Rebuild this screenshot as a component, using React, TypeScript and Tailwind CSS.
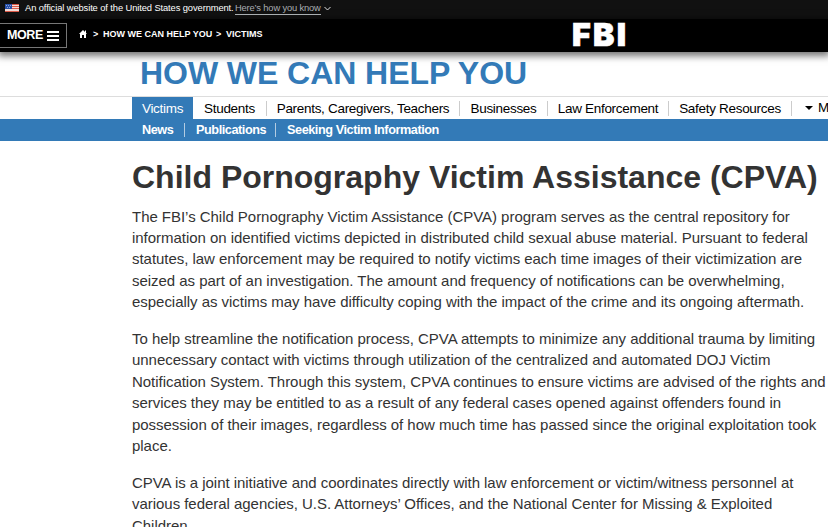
import React from "react";

const paragraphs = [
  [
    "The FBI’s Child Pornography Victim Assistance (CPVA) program serves as the central repository for",
    "information on identified victims depicted in distributed child sexual abuse material. Pursuant to federal",
    "statutes, law enforcement may be required to notify victims each time images of their victimization are",
    "seized as part of an investigation. The amount and frequency of notifications can be overwhelming,",
    "especially as victims may have difficulty coping with the impact of the crime and its ongoing aftermath.",
  ],
  [
    "To help streamline the notification process, CPVA attempts to minimize any additional trauma by limiting",
    "unnecessary contact with victims through utilization of the centralized and automated DOJ Victim",
    "Notification System. Through this system, CPVA continues to ensure victims are advised of the rights and",
    "services they may be entitled to as a result of any federal cases opened against offenders found in",
    "possession of their images, regardless of how much time has passed since the original exploitation took",
    "place.",
  ],
  [
    "CPVA is a joint initiative and coordinates directly with law enforcement or victim/witness personnel at",
    "various federal agencies, U.S. Attorneys’ Offices, and the National Center for Missing & Exploited",
    "Children.",
  ],
];

const tabs = [
  { label: "Students", width: "w-[74px]" },
  { label: "Parents, Caregivers, Teachers", width: "w-[193px]" },
  { label: "Businesses", width: "w-[88px]" },
  { label: "Law Enforcement", width: "w-[121px]" },
  { label: "Safety Resources", width: "w-[123px]" },
];

function Flag() {
  return (
    <svg width="14" height="8" viewBox="0 0 14 8" className="block shrink-0" shapeRendering="crispEdges">
      <rect width="14" height="8" fill="#f2dcd8" />
      <path d="M0 .5h14M0 2.5h14M0 4.5h14M0 7.5h14" stroke="#dc5a48" />
      <rect width="7" height="5" fill="#2850a8" />
      <path d="M1 1h1M3 1h1M5 1h1M2 3h1M4 3h1" stroke="#8fa3d6" />
    </svg>
  );
}

export default function App() {
  return (
    <div className="h-[527px] w-[828px] overflow-hidden bg-white font-['Liberation_Sans',Arial,sans-serif]">
      <div className="flex h-[19px] items-center bg-[#111] pb-[3px] pl-[5px] text-[9.35px] leading-none text-white">
        <Flag />
        <span className="ml-[6px] mt-[2px] w-[210px] whitespace-nowrap tracking-[-0.1px]">An official website of the United States government.</span>
        <span className="mt-[2px] h-[11px] w-[86px] whitespace-nowrap border-b border-[#a9aeb1] tracking-[-0.16px] text-[#a9aeb1]">Here’s how you know</span>
        <svg width="7" height="5" viewBox="0 0 7 5" className="ml-[3px]" fill="none" stroke="#ddd">
          <path d="M.5 1 3.5 4 6.5 1" />
        </svg>
      </div>
      <header className="flex h-[33px] bg-black text-white shadow-[0_2px_7px_2px_rgba(0,0,0,0.55)]">
        <div className="mt-[4px] flex h-[25px] w-[67px] shrink-0 items-center border border-l-0 border-[#777] pl-[7px] text-[12.5px] font-bold">
          <span className="w-[40px] tracking-[-0.4px]">MORE</span>
          <svg width="12" height="10" viewBox="0 0 12 10" stroke="#fff" strokeWidth="2" shapeRendering="crispEdges">
            <path d="M0 1h12M0 5h12M0 9h12" />
          </svg>
        </div>
        <nav className="flex h-[31px] w-[505px] shrink-0 items-center pl-[12px] text-[9px] font-bold">
          <svg width="8" height="8" viewBox="0 0 8 8" fill="#fff" className="-mt-[1px]">
            <path d="M4 0 0 4h1v4h2V5h2v3h2V4h1L7 3V.5H6V2z" />
          </svg>
          <span className="ml-[6px] w-[10px]">&gt;</span>
          <span className="w-[113px] whitespace-nowrap">HOW WE CAN HELP YOU</span>
          <span className="w-[10px]">&gt;</span>
          <span>VICTIMS</span>
        </nav>
        <div className="-mt-[1px] font-['Inter',sans-serif] text-[32px] font-black leading-[34px] tracking-[2.4px] [-webkit-text-stroke:0.7px_white]">FBI</div>
      </header>
      <h2 className="h-[44px] pl-[140px] text-[32px] font-bold leading-[42px] tracking-[-0.06px] text-[#337ab7]">HOW WE CAN HELP YOU</h2>
      <nav className="flex h-[23px] items-stretch whitespace-nowrap border-t border-[#ddd] pl-[132px] text-[13.5px] leading-[24px] tracking-[-0.3px] text-black">
        <div className="w-[61px] shrink-0 bg-[#337ab7] text-center text-white">Victims</div>
        {tabs.map((t) => (
          <div key={t.label} className={`${t.width} mt-[4px] h-[15px] shrink-0 border-r border-[#ccc] text-center leading-[16px]`}>{t.label}</div>
        ))}
        <div className="flex shrink-0 items-center pl-[13px]">
          <svg width="8" height="4" viewBox="0 0 8 4"><path d="M0 0h8L4 4z" /></svg>
          <span className="ml-[5px]">More</span>
        </div>
      </nav>
      <nav className="flex h-[22px] items-center whitespace-nowrap bg-[#337ab7] pl-[142px] text-[12.7px] font-bold leading-[14px] tracking-[-0.44px] text-white">
        <span className="w-[43px] border-r border-[#b3cce2]">News</span>
        <span className="w-[91px] border-r border-[#b3cce2] pl-[11px]">Publications</span>
        <span className="pl-[11px]">Seeking Victim Information</span>
      </nav>
      <main className="pl-[132px] text-[#333]">
        <h1 className="mt-[16px] h-[48.5px] whitespace-nowrap text-[32px] font-bold leading-[40px]">Child Pornography Victim Assistance (CPVA)</h1>
        {paragraphs.map((lines) => (
          <p key={lines[0]} className="mb-[15.2px] text-[15px] leading-[21.43px] tracking-[-0.035px]">
            {lines.map((line) => (
              <span key={line} className="block whitespace-nowrap">{line}</span>
            ))}
          </p>
        ))}
      </main>
    </div>
  );
}
